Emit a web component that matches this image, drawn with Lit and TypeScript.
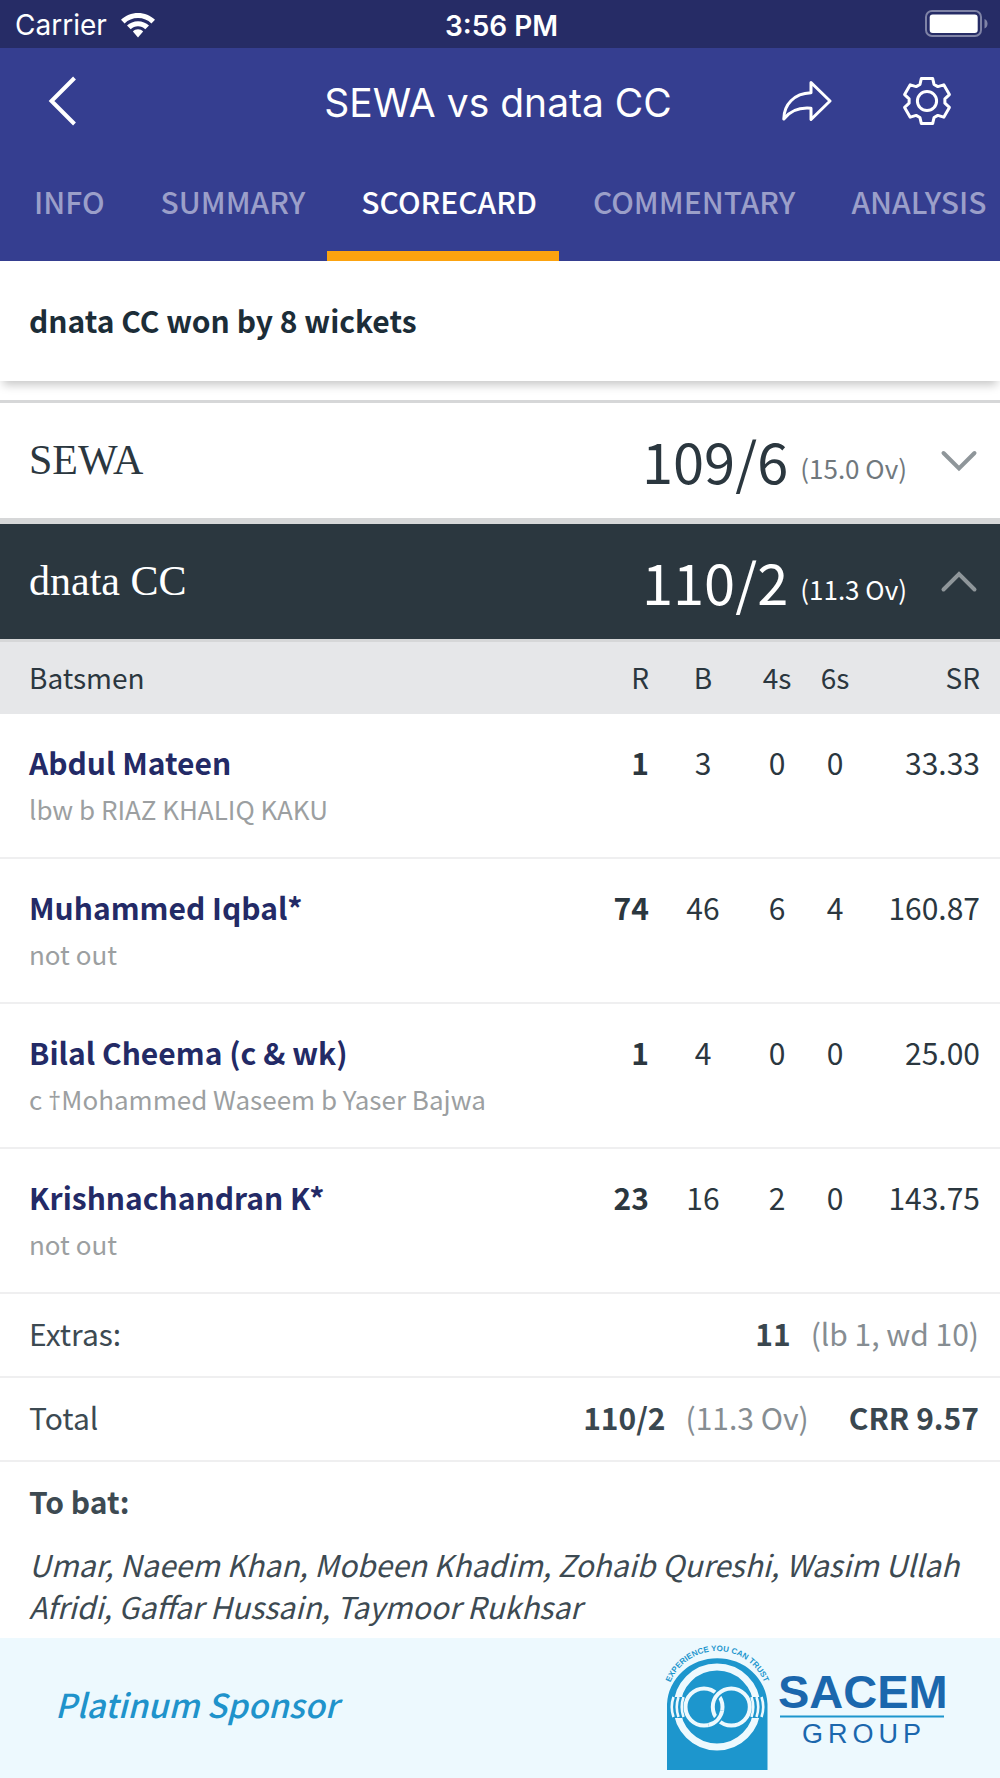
import { LitElement, html, css, svg } from "lit";
import { customElement, state } from "lit/decorators.js";
import { classMap } from "lit/directives/class-map.js";

interface Batter {
  name: string;
  dismissal: string;
  runs: number;
  balls: number;
  fours: number;
  sixes: number;
  rate: string;
}

const TABS = ["INFO", "SUMMARY", "SCORECARD", "COMMENTARY", "ANALYSIS"];

const BATTERS: Batter[] = [
  { name: "Abdul Mateen", dismissal: "lbw b RIAZ KHALIQ KAKU", runs: 1, balls: 3, fours: 0, sixes: 0, rate: "33.33" },
  { name: "Muhammed Iqbal*", dismissal: "not out", runs: 74, balls: 46, fours: 6, sixes: 4, rate: "160.87" },
  { name: "Bilal Cheema (c & wk)", dismissal: "c †Mohammed Waseem b Yaser Bajwa", runs: 1, balls: 4, fours: 0, sixes: 0, rate: "25.00" },
  { name: "Krishnachandran K*", dismissal: "not out", runs: 23, balls: 16, fours: 2, sixes: 0, rate: "143.75" },
];

/* Outline of a six-toothed cog centred on the origin. */
const cogPath = () => {
  const points: string[] = [];
  for (let tooth = 0; tooth < 6; tooth++) {
    const base = tooth * 60 - 90;
    for (const [angle, radius] of [[-23, 18], [-14, 23.3], [14, 23.3], [23, 18]]) {
      const a = ((base + angle) * Math.PI) / 180;
      points.push(`${(radius * Math.cos(a)).toFixed(2)} ${(radius * Math.sin(a)).toFixed(2)}`);
    }
  }
  return `M${points.join("L")}Z`;
};

@customElement("status-bar")
export class StatusBar extends LitElement {
  static styles = css`
    :host {
      display: grid;
      grid-template-columns: 1fr auto 1fr;
      align-items: center;
      height: 48px;
      padding: 0 12px 0 15px;
      background: #262c66;
      color: #fff;
      font: 400 28px/32px Inter, "Liberation Sans", sans-serif;
    }
    .carrier { display: flex; align-items: center; gap: 14px; padding-top: 2px; }
    .time { font-weight: 600; padding-top: 4px; }
    .battery { justify-self: end; }
    svg { display: block; }
  `;
  render() {
    return html`
      <div class="carrier">
        <span>Carrier</span>
        <svg width="34" height="25" viewBox="0 0 34 25" fill="#fff" role="img" aria-label="Wi-Fi">
          <path d="M17 0C10.500 0 4.500 2.600 0 6.800L3.600 10.400C7.100 7.100 11.800 5.100 17 5.100S26.900 7.100 30.400 10.400L34 6.800C29.500 2.600 23.500 0 17 0Z" />
          <path d="M17 8.200C12.800 8.200 8.900 9.800 6 12.600L9.700 16.200C11.600 14.400 14.200 13.300 17 13.300S22.400 14.400 24.300 16.200L28 12.600C25.100 9.800 21.200 8.200 17 8.200Z" />
          <path d="M17 16.300C15 16.300 13.200 17.100 11.900 18.400L17 24.500L22.100 18.400C20.800 17.100 19 16.300 17 16.300Z" />
        </svg>
      </div>
      <div class="time">3:56 PM</div>
      <svg class="battery" width="63" height="28" viewBox="0 0 63 28" role="img" aria-label="Battery full">
        <rect x="1" y="1" width="55" height="25" rx="6" fill="none" stroke="#7f83a6" stroke-width="2" />
        <rect x="4.700" y="4.500" width="48" height="18.500" rx="3" fill="#fff" />
        <path d="M59.500 9V18.500C61.500 17.500 62.500 16 62.500 13.700S61.500 10 59.500 9Z" fill="#7f83a6" />
      </svg>
    `;
  }
}

@customElement("match-header")
export class MatchHeader extends LitElement {
  @state() private active = "SCORECARD";

  static styles = css`
    :host {
      display: block;
      background: #353e90;
      color: #fff;
      overflow: hidden;
    }
    button {
      border: 0;
      margin: 0;
      padding: 0;
      background: none;
      color: inherit;
      font: inherit;
      cursor: pointer;
    }
    svg { display: block; }
    .bar {
      display: grid;
      grid-template-columns: 1fr auto 1fr;
      align-items: center;
      height: 106px;
      padding: 0 47px 0 43px;
    }
    .back { justify-self: start; }
    .title {
      margin: 0;
      padding-top: 4px;
      font: 400 39px/48px Inter, "Liberation Sans", sans-serif;
    }
    .actions { display: flex; justify-content: flex-end; align-items: center; gap: 69px; }
    .tabs { display: flex; height: 107px; }
    .tab {
      flex: none;
      box-sizing: border-box;
      padding: 0 22px 4px 34px;
      border-bottom: 10px solid transparent;
      color: #9b9fc9;
      font: 500 30px/42px "Noto Sans CJK SC", "Open Sans", sans-serif;
    }
    .tab.active { color: #fff; border-bottom-color: #fca30f; }
  `;
  render() {
    return html`
      <div class="bar">
        <button class="back" aria-label="Back">
          <svg width="40" height="52" viewBox="0 0 40 52" fill="none" stroke="#fff" stroke-width="4">
            <path d="M31.500 3L8.500 26L31.500 49" />
          </svg>
        </button>
        <h1 class="title">SEWA vs dnata CC</h1>
        <div class="actions">
          <button aria-label="Share">
            <svg width="50" height="42" viewBox="0 0 50 42" fill="none" stroke="#fff" stroke-width="3" stroke-linejoin="round">
              <path d="M29 2.500L48 21L29 39.500V28.300C18 27.300 8.500 30.500 1.800 39C1.800 24.500 12 13.500 29 12.800Z" />
            </svg>
          </button>
          <button aria-label="Settings">
            <svg width="52" height="52" viewBox="-26 -26 52 52" fill="none" stroke="#fff" stroke-width="3" stroke-linejoin="round">
              <path d=${cogPath()} />
              <circle r="9.600" />
            </svg>
          </button>
        </div>
      </div>
      <nav class="tabs" role="tablist">
        ${TABS.map(
          (tab) => html`<button
            role="tab"
            aria-selected=${tab === this.active}
            class=${classMap({ tab: true, active: tab === this.active })}
            @click=${() => (this.active = tab)}
          >${tab}</button>`
        )}
      </nav>
    `;
  }
}

@customElement("batting-table")
export class BattingTable extends LitElement {
  static styles = css`
    :host { display: block; }
    table { width: 100%; table-layout: fixed; border-collapse: separate; border-spacing: 0; }
    .c-runs { width: 80px; }
    .c-balls { width: 78px; }
    .c-fours { width: 70px; }
    .c-sixes { width: 46px; }
    .c-rate { width: 142px; }
    th, td {
      box-sizing: border-box;
      padding: 27px 0;
      vertical-align: top;
      text-align: center;
      font-weight: 400;
      border-bottom: 2px solid #efeff0;
    }
    thead th {
      padding: 14px 0 16px;
      border: 0;
      background: #e6e7e9;
      font-size: 28px;
    }
    tr > .who { text-align: left; padding-left: 29px; }
    tr > .runs { text-align: right; padding-right: 15px; }
    tr > .rate { text-align: right; padding-right: 20px; }
    tbody .runs { font-weight: 700; }
    .name { display: block; color: #232a66; font-weight: 700; }
    .how { display: block; margin-top: 5px; color: #9c9fa1; font-size: 26px; }
    .keeper { font-family: "Open Sans", sans-serif; line-height: 1; }
  `;

  /* The dagger that marks a wicket-keeper is set in a face where it is narrow. */
  private dismissal(text: string) {
    const [before, after] = text.split("†");
    return after === undefined ? before : html`${before}<span class="keeper">†</span>${after}`;
  }

  render() {
    return html`
      <table>
        <colgroup>
          <col /><col class="c-runs" /><col class="c-balls" /><col class="c-fours" /><col class="c-sixes" /><col class="c-rate" />
        </colgroup>
        <thead>
          <tr>
            <th class="who" scope="col">Batsmen</th>
            <th class="runs" scope="col">R</th>
            <th scope="col">B</th>
            <th scope="col">4s</th>
            <th scope="col">6s</th>
            <th class="rate" scope="col">SR</th>
          </tr>
        </thead>
        <tbody>
          ${BATTERS.map(
            (b) => html`<tr>
              <th class="who" scope="row"><span class="name">${b.name}</span><span class="how">${this.dismissal(b.dismissal)}</span></th>
              <td class="runs">${b.runs}</td>
              <td>${b.balls}</td>
              <td>${b.fours}</td>
              <td>${b.sixes}</td>
              <td class="rate">${b.rate}</td>
            </tr>`
          )}
        </tbody>
      </table>
    `;
  }
}

@customElement("sponsor-banner")
export class SponsorBanner extends LitElement {
  static styles = css`
    :host {
      display: flex;
      align-items: center;
      justify-content: space-between;
      height: 140px;
      padding: 0 50px 0 55px;
      background: #edf9fe;
    }
    .label { color: #1f93cb; font-size: 33px; font-style: italic; font-weight: 500; padding-bottom: 8px; }
    svg { display: block; }
  `;
  render() {
    const ribs = [0, 5, 10];
    return html`
      <span class="label">Platinum Sponsor</span>
      <svg width="290" height="140" viewBox="0 0 290 140" role="img" aria-label="SACEM Group">
        <defs><path id="arc" d="M6.500 63.800A50.800 50.800 0 0 1 108.100 63.800" /></defs>
        <path d="M7 132V66A50.300 48 0 0 1 107.500 66V132Z" fill="#1d96cd" />
        <circle cx="57" cy="69" r="40" fill="none" stroke="#edf9fe" stroke-width="7" />
        <path d="M9 59H29V80H9ZM86 59H106V80H86Z" fill="#1d96cd" />
        <g fill="none" stroke="#edf9fe">
          <g stroke-width="2.600">
            ${ribs.map((d) => svg`<path d="M${13.5 + d} 59Q${10 + d} 69 ${13.5 + d} 79M${101.5 - d} 59Q${105 - d} 69 ${101.5 - d} 79" />`)}
          </g>
          <circle cx="44" cy="69" r="18.500" stroke-width="4" />
          <path d="M53.900 62.700A18.500 18.500 0 0 1 65 51.600" stroke="#1d96cd" stroke-width="7" />
          <circle cx="71.300" cy="69" r="18.500" stroke-width="4" />
          <path d="M62.200 72.500A18.500 18.500 0 0 1 48.500 87" stroke="#1d96cd" stroke-width="7" />
          <path d="M62.200 72.500A18.500 18.500 0 0 1 48.500 87" stroke-width="4" />
        </g>
        <text fill="#1d96cd" font-family="Liberation Sans, sans-serif" font-weight="700" font-size="8">
          <textPath href="#arc" startOffset="50%" text-anchor="middle">EXPERIENCE YOU CAN TRUST</textPath>
        </text>
        <text x="118" y="70" fill="#1b67ad" font-family="Liberation Sans, sans-serif" font-weight="700" font-size="47">SACEM</text>
        <path d="M120 78.500H284" stroke="#1d96cd" stroke-width="2.200" />
        <text x="204" y="105" text-anchor="middle" fill="#1b67ad" font-family="Liberation Sans, sans-serif" font-size="27" letter-spacing="5">GROUP</text>
      </svg>
    `;
  }
}

@customElement("app-root")
export class AppRoot extends LitElement {
  @state() private open = true;

  static styles = css`
    :host {
      display: block;
      background: #fff;
      color: #2b373f;
      font: 400 30px/42px "Noto Sans CJK SC", "Open Sans", sans-serif;
    }
    .result {
      margin: 0 0 19px;
      padding: 38px 29px 40px;
      color: #1c2d38;
      font-size: 30px;
      font-weight: 700;
      line-height: 42px;
      box-shadow: 0 7px 9px -3px #00000038;
    }
    .innings {
      display: flex;
      align-items: center;
      width: 100%;
      box-sizing: border-box;
      height: 121px;
      margin: 0;
      padding: 0 22px 2px 29px;
      border: 0 solid #d6d7d8;
      border-width: 3px 0;
      background: #fff;
      color: #2b373f;
      text-align: left;
      cursor: pointer;
    }
    .innings.open { background: #2b373f; color: #fff; }
    .team { flex: 1; font: 300 42px/50px "Roboto Slab", "Liberation Serif", serif; }
    .score { display: flex; align-items: flex-end; gap: 12px; }
    .total { font: 400 56px/64px "Roboto Slab", "Noto Sans CJK SC", sans-serif; }
    .overs { font: 400 26px/48px "Noto Sans CJK SC", "Open Sans", sans-serif; color: #70787d; }
    .open .overs { color: #fff; }
    .chevron { margin: 2px 0 0 33px; }
    .summary {
      display: flex;
      align-items: baseline;
      padding: 18px 21px 22px 29px;
      border-bottom: 2px solid #efeff0;
      color: #3d4a52;
    }
    .what { flex: 1; }
    .strong { font-weight: 700; color: #3a474f; }
    .note { margin-left: 20px; color: #868d92; }
    .crr { margin-left: 40px; }
    .yet { padding: 18px 29px 11px; color: #3d4a52; }
    .yet h2 { margin: 0 0 21px; font-size: 30px; font-weight: 700; line-height: 42px; }
    .yet p { margin: 0; font-style: italic; }
  `;

  private chevron(up: boolean) {
    return html`<svg class="chevron" width="38" height="24" viewBox="0 0 38 24" fill="none" stroke="#8f969a" stroke-width="4" stroke-linecap="round">
      <path d=${up ? "M3.500 19.500L19 4L34.500 19.500" : "M3.500 4L19 19.500L34.500 4"} />
    </svg>`;
  }

  render() {
    return html`
      <status-bar></status-bar>
      <match-header></match-header>
      <main>
        <p class="result">dnata CC won by 8 wickets</p>
        <button class="innings" aria-expanded="false">
          <span class="team">SEWA</span>
          <span class="score"><span class="total">109/6</span><span class="overs">(15.0 Ov)</span></span>
          ${this.chevron(false)}
        </button>
        <button class="innings open" aria-expanded=${this.open} @click=${() => (this.open = !this.open)}>
          <span class="team">dnata CC</span>
          <span class="score"><span class="total">110/2</span><span class="overs">(11.3 Ov)</span></span>
          ${this.chevron(this.open)}
        </button>
        ${this.open
          ? html`
              <batting-table></batting-table>
              <div class="summary">
                <span class="what">Extras:</span><span class="strong">11</span><span class="note">(lb 1, wd 10)</span>
              </div>
              <div class="summary">
                <span class="what">Total</span><span class="strong">110/2</span><span class="note">(11.3 Ov)</span><span class="strong crr">CRR 9.57</span>
              </div>
              <section class="yet">
                <h2>To bat:</h2>
                <p>Umar, Naeem Khan, Mobeen Khadim, Zohaib Qureshi, Wasim Ullah Afridi, Gaffar Hussain, Taymoor Rukhsar</p>
              </section>
            `
          : null}
      </main>
      <sponsor-banner></sponsor-banner>
    `;
  }
}
